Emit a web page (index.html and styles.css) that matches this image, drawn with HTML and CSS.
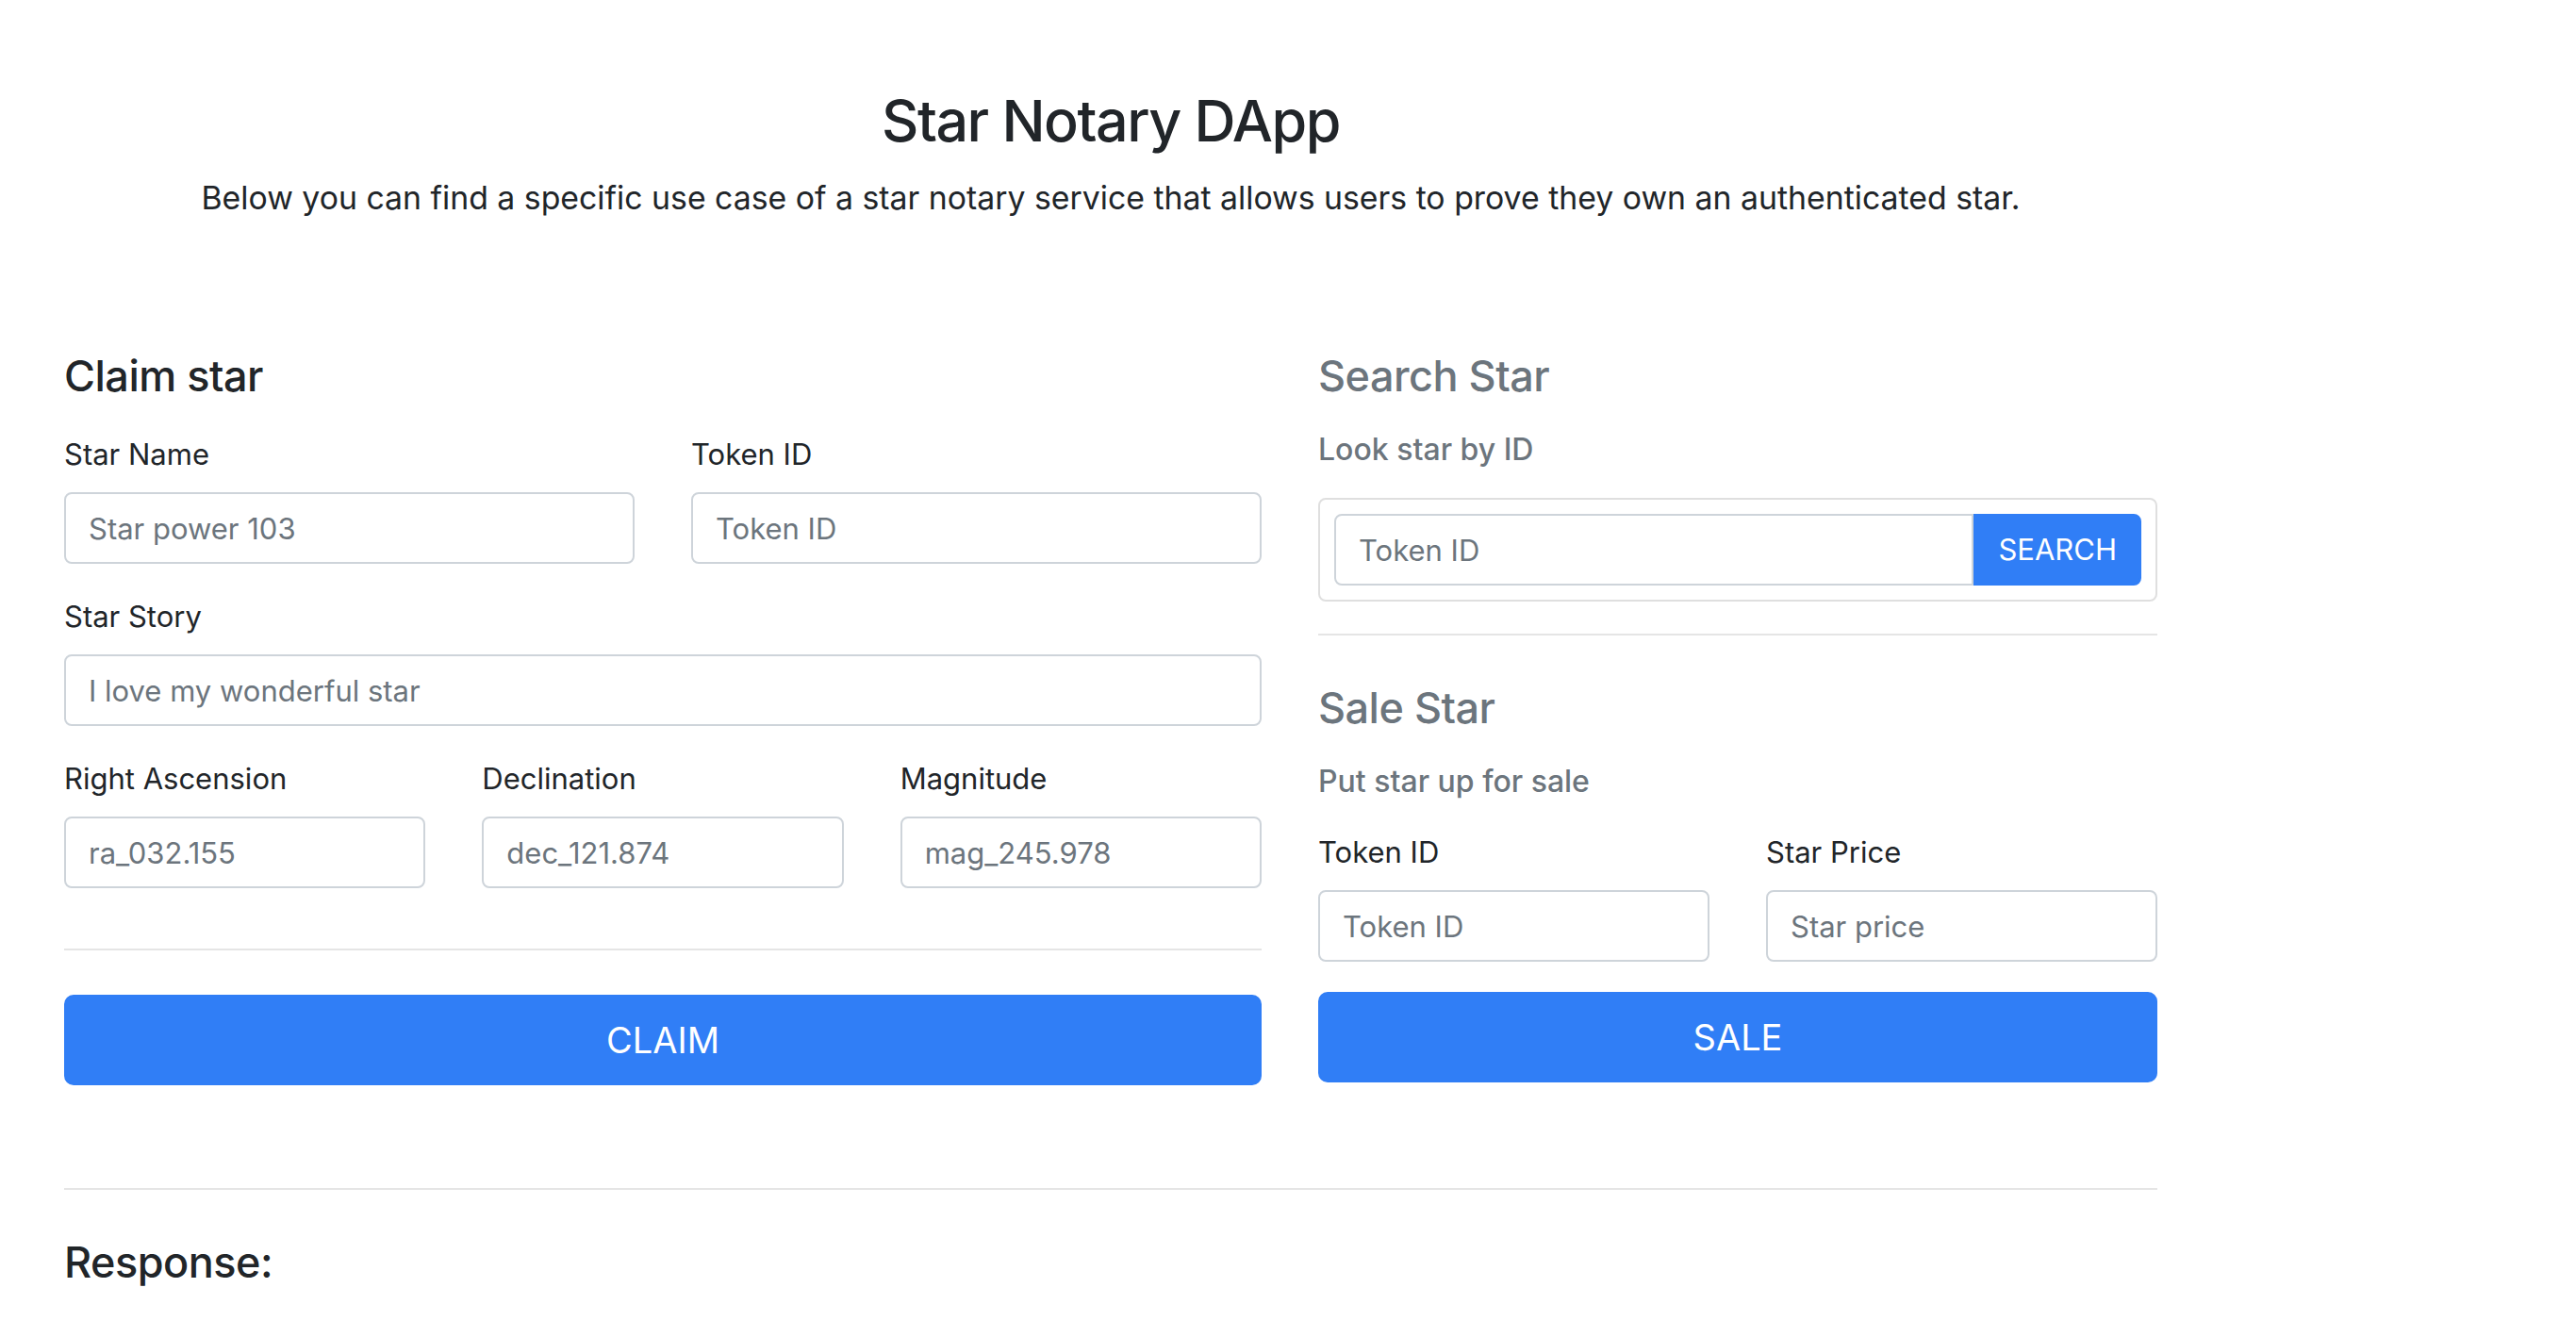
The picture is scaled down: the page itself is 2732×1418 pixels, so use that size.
FILE: index.html
```html
<!DOCTYPE html>
<html lang="en">
<head>
<meta charset="utf-8">
<title>Star Notary DApp</title>
<link rel="stylesheet" href="styles.css">
</head>
<body>
<div class="page">
  <header class="intro">
    <h2 class="title">Star Notary DApp</h2>
    <p class="lead">Below you can find a specific use case of a star notary service that allows users to prove they own an authenticated star.</p>
  </header>

  <div class="columns">
    <section class="col-left">
      <h4 class="section-title">Claim star</h4>
      <div class="row2 block-gap">
        <div class="field">
          <label class="label">Star Name</label>
          <input class="input" type="text" placeholder="Star power 103">
        </div>
        <div class="field">
          <label class="label">Token ID</label>
          <input class="input" type="text" placeholder="Token ID">
        </div>
      </div>
      <div class="field block-gap">
        <label class="label">Star Story</label>
        <input class="input" type="text" placeholder="I love my wonderful star">
      </div>
      <div class="row3 before-divider">
        <div class="field">
          <label class="label">Right Ascension</label>
          <input class="input" type="text" placeholder="ra_032.155">
        </div>
        <div class="field">
          <label class="label">Declination</label>
          <input class="input" type="text" placeholder="dec_121.874">
        </div>
        <div class="field">
          <label class="label">Magnitude</label>
          <input class="input" type="text" placeholder="mag_245.978">
        </div>
      </div>
      <hr class="divider divider-claim">
      <button class="btn-lg" type="button">CLAIM</button>
    </section>

    <section class="col-right">
      <h4 class="section-title muted title-search">Search Star</h4>
      <h6 class="subtitle muted">Look star by ID</h6>
      <div class="search-card">
        <input class="input input-joined" type="text" placeholder="Token ID">
        <button class="btn-search" type="button">SEARCH</button>
      </div>
      <hr class="divider divider-search">
      <h4 class="section-title muted title-sale">Sale Star</h4>
      <h6 class="subtitle muted">Put star up for sale</h6>
      <div class="row2 block-gap">
        <div class="field">
          <label class="label">Token ID</label>
          <input class="input" type="text" placeholder="Token ID">
        </div>
        <div class="field">
          <label class="label">Star Price</label>
          <input class="input" type="text" placeholder="Star price">
        </div>
      </div>
      <button class="btn-lg" type="button">SALE</button>
    </section>
  </div>

  <hr class="divider divider-response">
  <h4 class="section-title response-title">Response:</h4>
</div>
</body>
</html>
```
FILE: styles.css
```css
* {
  box-sizing: border-box;
}

html, body {
  margin: 0;
  background: #ffffff;
}

body {
  font-family: Inter, "Noto Sans", "Liberation Sans", sans-serif;
  font-size: 31px;
  line-height: 1.5;
  color: #212529;
}

.page {
  width: 2220px;
  margin-left: 68px;
  padding-bottom: 40px;
}

.intro {
  text-align: center;
  padding-top: 90px;
}

.title {
  margin: 0;
  font-size: 61px;
  font-weight: 500;
  line-height: 76px;
  letter-spacing: -1.5px;
}

.lead {
  margin: 20px 0 0;
  font-size: 33.8px;
  line-height: 48px;
  font-weight: 400;
}

.columns {
  display: grid;
  grid-template-columns: 1270px 890px;
  column-gap: 60px;
  margin-top: 136px;
  align-items: start;
}

.section-title {
  margin: 0 0 30px;
  font-size: 45px;
  font-weight: 500;
  line-height: 58px;
  letter-spacing: -0.5px;
}

.muted {
  color: #6c757d;
}

.subtitle {
  margin: 0 0 32px;
  font-size: 32px;
  font-weight: 500;
  line-height: 38px;
}

.label {
  display: block;
  margin-bottom: 16px;
  line-height: 48px;
}

.row2 {
  display: grid;
  grid-template-columns: 1fr 1fr;
  column-gap: 60px;
}

.row3 {
  display: grid;
  grid-template-columns: 1fr 1fr 1fr;
  column-gap: 60px;
}

.block-gap {
  margin-bottom: 32px;
}

.before-divider {
  margin-bottom: 64px;
}

.input {
  display: block;
  width: 100%;
  height: 76px;
  padding: 12px 24px;
  font-family: inherit;
  font-size: 31px;
  line-height: 48px;
  color: #495057;
  background: #ffffff;
  border: 2px solid #ced4da;
  border-radius: 8px;
  outline: none;
}

.input::placeholder {
  color: #6c757d;
  opacity: 1;
}

.divider {
  margin: 0;
  height: 0;
  border: 0;
  border-top: 2px solid rgba(0, 0, 0, 0.1);
}

.divider-claim {
  margin-bottom: 47px;
}

.btn-lg {
  display: block;
  width: 100%;
  height: 96px;
  padding: 0 32px;
  font-family: inherit;
  font-size: 38px;
  line-height: 60px;
  font-weight: 400;
  color: #ffffff;
  background: #307ef6;
  border: 2px solid #307ef6;
  border-radius: 10px;
  cursor: pointer;
}

.search-card {
  display: flex;
  padding: 15px;
  border: 2px solid rgba(0, 0, 0, 0.125);
  border-radius: 8px;
  margin-bottom: 34px;
}

.input-joined {
  flex: 1;
  min-width: 0;
  border-top-right-radius: 0;
  border-bottom-right-radius: 0;
}

.btn-search {
  flex: 0 0 auto;
  height: 76px;
  padding: 12px 24px;
  font-family: inherit;
  font-size: 31px;
  line-height: 48px;
  color: #ffffff;
  background: #307ef6;
  border: 2px solid #307ef6;
  border-radius: 0 8px 8px 0;
  cursor: pointer;
}

.divider-search {
  margin-bottom: 48px;
}

.divider-response {
  margin-top: 109px;
}

.response-title {
  margin-top: 48px;
}
```
